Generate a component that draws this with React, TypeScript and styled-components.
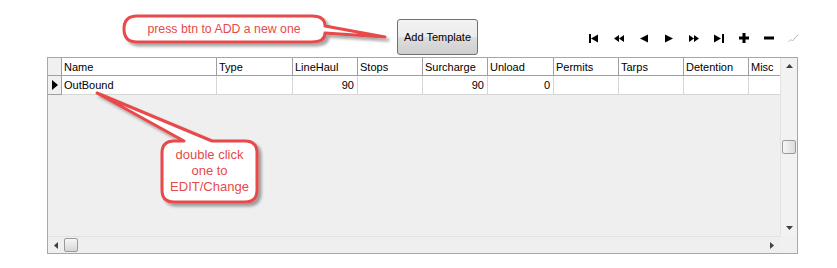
import styled, { createGlobalStyle } from 'styled-components'

const GlobalStyle = createGlobalStyle`
    html, body {
        margin: 0;
        padding: 0;
        background: #ffffff;
        font-family: "Liberation Sans", Arial, sans-serif;
    }
`

const Page = styled.div`
    position: relative;
    width: 837px;
    height: 268px;
    overflow: hidden;
`

const TopBar = styled.div`
    display: flex;
    align-items: flex-start;
    height: 57px;
    padding-left: 397px;
    box-sizing: border-box;
`

const AddButton = styled.button`
    margin-top: 19px;
    width: 81px;
    height: 36px;
    padding: 0;
    border: 1px solid #707070;
    border-radius: 3px;
    background: linear-gradient(#f3f3f3 0%, #ebebeb 50%, #dddddd 51%, #cfcfcf 100%);
    font-family: "Liberation Sans", Arial, sans-serif;
    font-size: 11px;
    color: #000;
`

const Navigator = styled.div`
    display: flex;
    margin-left: 103px;
    margin-top: 30px;
`

const NavBtn = styled.div`
    width: 25px;
    height: 16px;
    display: flex;
    align-items: center;
    justify-content: center;
`

const Frame = styled.div`
    margin-left: 47px;
    width: 751px;
    height: 197px;
    box-sizing: border-box;
    border: 1px solid #a7a7a7;
    display: grid;
    grid-template-columns: 1fr 17px;
    grid-template-rows: 1fr 17px;
    background: #f0f0f0;
`

const Body = styled.div`
    overflow: hidden;
    background: #efefef;
`

const Row = styled.div<{ $h: number }>`
    display: flex;
    height: ${p => p.$h}px;
    width: max-content;
`

const Cell = styled.div<{ $w: number; $right?: boolean; $head?: boolean }>`
    width: ${p => p.$w}px;
    flex: none;
    box-sizing: border-box;
    background: #ffffff;
    border-right: 1px solid ${p => (p.$head ? '#a0a0a0' : '#d6d6d6')};
    border-bottom: 1px solid ${p => (p.$head ? '#a0a0a0' : '#d6d6d6')};
    font-size: 11px;
    color: #000;
    padding: 0 3px 0 2px;
    display: flex;
    align-items: center;
    justify-content: ${p => (p.$right ? 'flex-end' : 'flex-start')};
    white-space: nowrap;
    overflow: hidden;
`

const Indicator = styled.div`
    width: 14px;
    flex: none;
    box-sizing: border-box;
    background: #f0f0f0;
    border-right: 1px solid #a0a0a0;
    border-bottom: 1px solid #a0a0a0;
    display: flex;
    align-items: center;
    justify-content: center;
`

const VScroll = styled.div`
    background: #f2f2f2;
    border-left: 1px solid #e2e2e2;
    display: flex;
    flex-direction: column;
    align-items: center;
`

const HScroll = styled.div`
    background: #efefef;
    border-top: 1px solid #e2e2e2;
    display: flex;
    align-items: center;
`

const Corner = styled.div`
    background: #f0f0f0;
`

const ArrowBox = styled.div`
    width: 16px;
    height: 16px;
    flex: none;
    display: flex;
    align-items: center;
    justify-content: center;
`

const Thumb = styled.div<{ $vertical?: boolean }>`
    width: 14px;
    height: 14px;
    flex: none;
    box-sizing: border-box;
    border: 1px solid #9a9a9a;
    border-radius: 2px;
    background: ${p =>
        p.$vertical
            ? 'linear-gradient(to right, #f6f6f6, #dcdcdc)'
            : 'linear-gradient(#f6f6f6, #d6d6d6)'};
`

const ThumbGap = styled.div`
    height: 66px;
    flex: none;
`

const Spacer = styled.div`
    flex: 1;
`

const Overlay = styled.svg`
    position: absolute;
    left: 0;
    top: 0;
    pointer-events: none;
`

const Note = styled.div<{ $x: number; $y: number; $w: number; $size: number }>`
    position: absolute;
    left: ${p => p.$x}px;
    top: ${p => p.$y}px;
    width: ${p => p.$w}px;
    text-align: center;
    color: #e64a4a;
    font-family: "Liberation Sans", Arial, sans-serif;
    font-size: ${p => p.$size}px;
    line-height: 16px;
`

const columns = [
    { name: 'Name', w: 155 },
    { name: 'Type', w: 76 },
    { name: 'LineHaul', w: 65 },
    { name: 'Stops', w: 65 },
    { name: 'Surcharge', w: 65 },
    { name: 'Unload', w: 66 },
    { name: 'Permits', w: 65 },
    { name: 'Tarps', w: 65 },
    { name: 'Detention', w: 65 },
    { name: 'Misc', w: 65 }
]

const rowData: { v: string; right?: boolean }[] = [
    { v: 'OutBound' },
    { v: '' },
    { v: '90', right: true },
    { v: '' },
    { v: '90', right: true },
    { v: '0', right: true },
    { v: '' },
    { v: '' },
    { v: '' },
    { v: '' }
]

const navIcons = [
    <svg width="10" height="9" viewBox="0 0 10 9"><rect x="0" y="0" width="2" height="9" /><path d="M2 4.5 L9 0.5 V8.5 Z" /></svg>,
    <svg width="10" height="9" viewBox="0 0 10 9"><path d="M0 4.5 L5 1 V8 Z M5 4.5 L10 1 V8 Z" /></svg>,
    <svg width="8" height="9" viewBox="0 0 8 9"><path d="M0 4.5 L8 0.5 V8.5 Z" /></svg>,
    <svg width="8" height="9" viewBox="0 0 8 9"><path d="M8 4.5 L0 0.5 V8.5 Z" /></svg>,
    <svg width="10" height="9" viewBox="0 0 10 9"><path d="M10 4.5 L5 1 V8 Z M5 4.5 L0 1 V8 Z" /></svg>,
    <svg width="10" height="9" viewBox="0 0 10 9"><path d="M7 4.5 L0 0.5 V8.5 Z" /><rect x="8" y="0" width="2" height="9" /></svg>,
    <svg width="10" height="10" viewBox="0 0 10 10"><rect x="3.5" y="0" width="3" height="10" /><rect x="0" y="3.5" width="10" height="3" /></svg>,
    <svg width="10" height="10" viewBox="0 0 10 10"><rect x="0" y="3.5" width="10" height="3" /></svg>,
    <svg width="11" height="9" viewBox="0 0 11 9" fill="none" stroke="#b8b8b8" strokeWidth="1"><path d="M0.5 8 L3 5.5 L4.5 7 L8 2.5 L10.5 1" /></svg>
]

const Callouts = function() {
    return (
        <>
            <Overlay width="837" height="268" viewBox="0 0 837 268">
                <defs>
                    <filter id="shadow" x="-20%" y="-20%" width="140%" height="160%">
                        <feDropShadow dx="3" dy="3" stdDeviation="1.6" floodColor="#000" floodOpacity="0.35" />
                    </filter>
                </defs>
                <path
                    d="M137 16 H312 Q325 16 325 26 L385 37 L325 33 Q325 42 312 42 H137 Q124 42 124 29 Q124 16 137 16 Z"
                    fill="#ffffff"
                    stroke="#e8494b"
                    strokeWidth="3"
                    strokeLinejoin="round"
                    filter="url(#shadow)"
                />
                <path
                    d="M174 141 H184 L97 93 L212 141 H245 Q257 141 257 153 V190 Q257 202 245 202 H174 Q162 202 162 190 V153 Q162 141 174 141 Z"
                    fill="#ffffff"
                    stroke="#e8494b"
                    strokeWidth="3"
                    strokeLinejoin="round"
                    filter="url(#shadow)"
                />
            </Overlay>
            <Note $x={124} $y={21} $w={200} $size={12.3}>press btn to ADD a new one</Note>
            <Note $x={162} $y={147} $w={95} $size={13}>
                double click<br />one to<br />EDIT/Change
            </Note>
        </>
    )
}

const App = function() {
    return (
        <Page>
            <GlobalStyle />
            <TopBar>
                <AddButton>Add Template</AddButton>
                <Navigator>
                    {navIcons.map((icon, i) => (
                        <NavBtn key={i}>{icon}</NavBtn>
                    ))}
                </Navigator>
            </TopBar>
            <Frame>
                <Body>
                    <Row $h={18}>
                        <Indicator />
                        {columns.map(c => (
                            <Cell key={c.name} $w={c.w} $head>{c.name}</Cell>
                        ))}
                    </Row>
                    <Row $h={19}>
                        <Indicator>
                            <svg width="6" height="10" viewBox="0 0 6 10"><path d="M0 0 L6 5 L0 10 Z" /></svg>
                        </Indicator>
                        {rowData.map((d, i) => (
                            <Cell key={i} $w={columns[i].w} $right={d.right}>{d.v}</Cell>
                        ))}
                    </Row>
                </Body>
                <VScroll>
                    <ArrowBox>
                        <svg width="7" height="4" viewBox="0 0 7 4"><path d="M0 4 L3.5 0 L7 4 Z" fill="#404040" /></svg>
                    </ArrowBox>
                    <ThumbGap />
                    <Thumb $vertical />
                    <Spacer />
                    <ArrowBox>
                        <svg width="7" height="4" viewBox="0 0 7 4"><path d="M0 0 L3.5 4 L7 0 Z" fill="#404040" /></svg>
                    </ArrowBox>
                </VScroll>
                <HScroll>
                    <ArrowBox>
                        <svg width="4" height="7" viewBox="0 0 4 7"><path d="M4 0 L0 3.5 L4 7 Z" fill="#404040" /></svg>
                    </ArrowBox>
                    <Thumb />
                    <Spacer />
                    <ArrowBox>
                        <svg width="4" height="7" viewBox="0 0 4 7"><path d="M0 0 L4 3.5 L0 7 Z" fill="#404040" /></svg>
                    </ArrowBox>
                </HScroll>
                <Corner />
            </Frame>
            <Callouts />
        </Page>
    )
}

export default App
